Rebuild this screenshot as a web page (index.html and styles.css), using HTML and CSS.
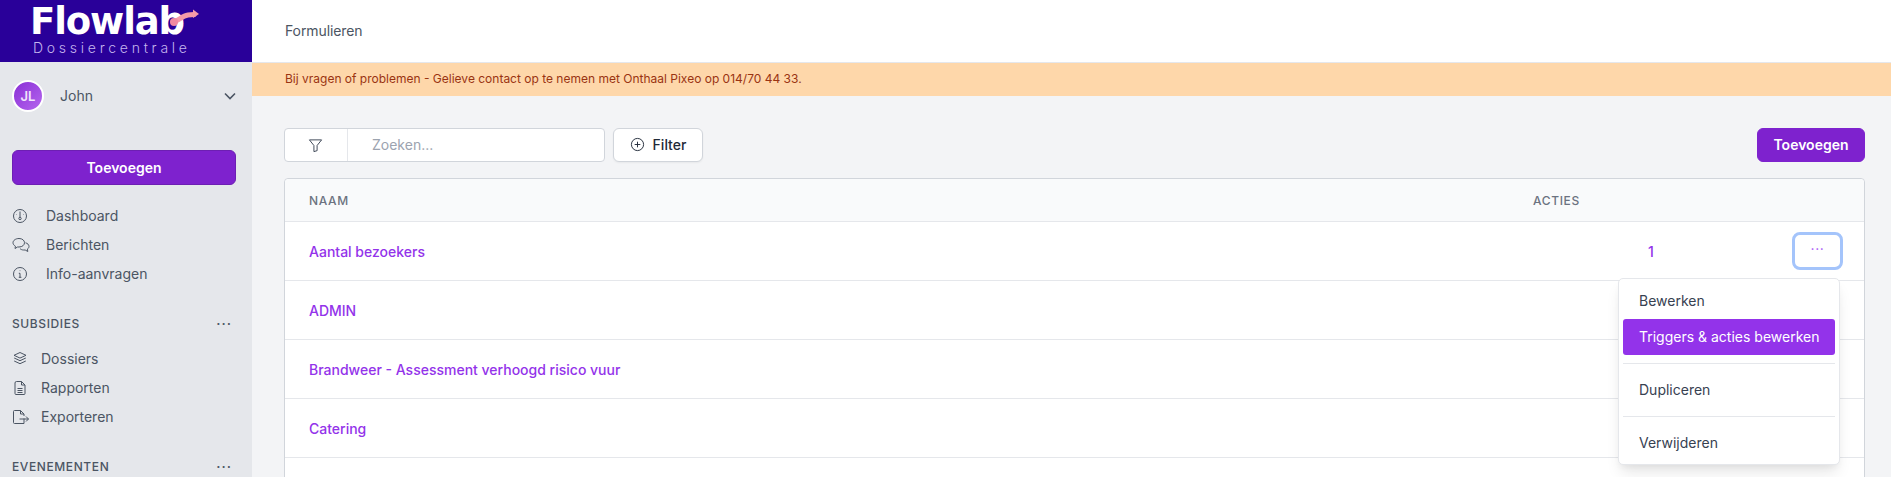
FILE: index.html
```html
<!DOCTYPE html>
<html lang="nl">
<head>
<meta charset="utf-8">
<title>Formulieren</title>
<link rel="stylesheet" href="styles.css">
</head>
<body>
<div class="app">
  <aside class="sidebar">
    <div class="brand">
      <div class="brand-inner">
        <div class="brand-name">Flowlab</div>
        <div class="brand-sub">Dossiercentrale</div>
        <svg class="brand-arrow" viewBox="0 0 32 20" width="32" height="20" aria-hidden="true"><path d="M4 14 C9 13 13 8 19 7 L25 6.500" fill="none" stroke="#f59aa8" stroke-width="5" stroke-linecap="round"/><path d="M24 1.500 L30 6 L24 10 Z" fill="#f59aa8"/><circle cx="5" cy="14" r="4" fill="#f08aa0"/></svg>
      </div>
    </div>
    <div class="user">
      <div class="avatar">JL</div>
      <span class="user-name">John</span>
      <svg class="chev" viewBox="0 0 12 8" width="12" height="8" aria-hidden="true"><path d="M1 1.500 L6 6.500 L11 1.500" fill="none" stroke="#4b5563" stroke-width="1.600"/></svg>
    </div>
    <button class="btn btn-primary btn-wide">Toevoegen</button>
    <nav class="nav nav-top">
      <a class="nav-item"><svg class="ico" viewBox="0 0 16 16"><circle cx="8" cy="8" r="6.500"/><path d="M8 4v5M8 3v.5M4 6l.4.4M12 6l-.4.4"/><circle cx="8" cy="10.500" r="1.200"/></svg><span>Dashboard</span></a>
      <a class="nav-item"><svg class="ico ico-wide" viewBox="0 0 18 16"><path d="M7 1.500c3.300 0 5.500 1.900 5.500 4.200S10.300 10 7 10H5.500L3 11.500l.4-2.300C2 8.400 1 7.200 1 5.700 1 3.400 3.700 1.500 7 1.500z"/><path d="M13.500 5.800c2 .5 3.500 1.900 3.500 3.600 0 1.100-.6 2-1.600 2.700l.4 2.400-2.600-1.500h-1.600c-1.500 0-2.900-.6-3.600-1.500"/></svg><span>Berichten</span></a>
      <a class="nav-item"><svg class="ico" viewBox="0 0 16 16"><circle cx="8" cy="8" r="6.500"/><path d="M6.800 7.300H8v4M6.800 11.300h2.600M8 4.500v.6"/></svg><span>Info-aanvragen</span></a>
    </nav>
    <div class="section-head"><span>SUBSIDIES</span><span class="more">···</span></div>
    <nav class="nav nav-sub">
      <a class="nav-item"><svg class="ico" viewBox="0 0 16 16"><path d="M8 1.500l6 2.800-6 2.800-6-2.800z"/><path d="M2.200 7L8 9.700 13.800 7M2.200 10l5.800 2.700 5.800-2.700"/></svg><span>Dossiers</span></a>
      <a class="nav-item"><svg class="ico" viewBox="0 0 16 16"><path d="M3 3a1.500 1.500 0 0 1 1.500-1.500h5L13 5v8.500a1 1 0 0 1-1 1H4a1 1 0 0 1-1-1z"/><path d="M9.500 1.500V5H13M5.500 8.500h5M5.500 10.500h5M5.500 12.500h5"/></svg><span>Rapporten</span></a>
      <a class="nav-item"><svg class="ico ico-wide" viewBox="0 0 18 16"><path d="M12 9.500V14.500H2.500a1 1 0 0 1-1-1V2.500a1 1 0 0 1 1-1h6L12 5v2M8.500 1.500V5H12"/><path d="M7.500 10h9M14 7.500l2.500 2.500-2.500 2.500"/></svg><span>Exporteren</span></a>
    </nav>
    <div class="section-head section-last"><span>EVENEMENTEN</span><span class="more">···</span></div>
  </aside>
  <main class="main">
    <header class="topbar">Formulieren</header>
    <div class="notice">Bij vragen of problemen - Gelieve contact op te nemen met Onthaal Pixeo op 014/70 44 33.</div>
    <div class="content">
      <div class="toolbar">
        <div class="search">
          <div class="search-filter"><svg class="ico ico-funnel" viewBox="0 0 16 16"><path d="M1.500 2h13L9.700 8v5.500L6.300 14.500V8z"/></svg></div>
          <div class="search-input">Zoeken...</div>
        </div>
        <button class="btn btn-filter"><svg class="ico ico-plus" viewBox="0 0 16 16"><circle cx="8" cy="8" r="6.500"/><path d="M8 5v6M5 8h6"/></svg>Filter</button>
        <button class="btn btn-primary btn-add">Toevoegen</button>
      </div>
      <div class="table">
        <div class="row row-head"><span class="col-name">NAAM</span><span class="col-act">ACTIES</span></div>
        <div class="row"><a class="col-name link">Aantal bezoekers</a><span class="count">1</span><button class="dots dots-focus">···</button></div>
        <div class="row"><a class="col-name link">ADMIN</a></div>
        <div class="row"><a class="col-name link">Brandweer - Assessment verhoogd risico vuur</a></div>
        <div class="row"><a class="col-name link">Catering</a></div>
        <div class="row"></div>
        <div class="menu">
          <div class="menu-item">Bewerken</div>
          <div class="menu-item menu-active">Triggers &amp; acties bewerken</div>
          <div class="menu-sep"></div>
          <div class="menu-item">Dupliceren</div>
          <div class="menu-sep"></div>
          <div class="menu-item">Verwijderen</div>
        </div>
      </div>
    </div>
  </main>
</div>
</body>
</html>
```
FILE: styles.css
```css
* { box-sizing: border-box; }
html, body { margin: 0; height: 477px; overflow: hidden; }
body { font-family: Inter, "Liberation Sans", sans-serif; font-size: 14px; color: #374151; background: #f3f4f6; }
.app { display: flex; height: 477px; overflow: hidden; }

.sidebar { width: 252px; flex: none; background: #e5e7eb; display: flex; flex-direction: column; color: #4b5563; }
.brand { height: 62px; background: #290099; padding: 3px 0 0 33px; flex: none; }
.brand-inner { position: relative; width: 170px; }
.brand-name { font-family: "DejaVu Sans", sans-serif; font-size: 37px; line-height: 37px; font-weight: 700; color: #fff; letter-spacing: -1.1px; height: 37px; margin-left: -3px; }
.brand-sub { font-size: 14px; font-weight: 300; line-height: 16px; letter-spacing: 3.75px; color: #c5b5ee; white-space: nowrap; }
.brand-arrow { position: absolute; left: 136px; top: 5px; }

.user { display: flex; align-items: center; height: 33px; margin: 17px 16px 0 12px; }
.avatar { width: 32px; height: 32px; border-radius: 50%; border: 2px solid #fff; background: linear-gradient(135deg, #8a2fd6, #b566ee); color: #f1e6fb; font-size: 13px; font-weight: 600; display: flex; align-items: center; justify-content: center; }
.user-name { margin-left: 16px; flex: 1; font-size: 14px; }

.btn { font-family: inherit; font-size: 14px; font-weight: 600; border-radius: 6px; cursor: pointer; padding: 0 0 2px; }
.btn-primary { background: #7e22ce; color: #fff; border: 1px solid #6d1fb3; }
.btn-wide { width: 224px; height: 35px; margin: 38px 0 0 12px; flex: none; padding-bottom: 0; }

.nav { display: flex; flex-direction: column; }
.nav-item { display: flex; align-items: center; height: 29px; color: #4b5563; padding-left: 12px; }
.nav-top { margin-top: 16px; }
.nav-top .nav-item span { margin-left: 18px; }
.nav-sub { margin-top: 13px; }
.nav-sub .nav-item span { margin-left: 13px; }
.ico { width: 16px; height: 16px; fill: none; stroke: #4b5563; stroke-width: 1; flex: none; }
.ico-wide { width: 18px; margin-right: -2px; }

.section-head { display: flex; justify-content: space-between; align-items: center; height: 16px; margin: 27px 20px 0 12px; font-size: 12px; font-weight: 500; letter-spacing: 0.6px; color: #4b5563; }
.section-last { margin-top: 27px; }
.more { font-size: 14px; letter-spacing: 1px; }

.main { flex: 1; min-width: 0; display: flex; flex-direction: column; }
.topbar { height: 62px; flex: none; background: #fff; padding: 0 0 2px 33px; display: flex; align-items: center; color: #4b5563; font-size: 14px; letter-spacing: -0.1px; }
.notice { height: 34px; flex: none; background: #fed7aa; border-top: 1px solid #e5e7eb; padding: 0 0 2px 33px; display: flex; align-items: center; color: #9a3412; font-size: 12px; }
.content { padding: 32px 26px 0 32px; }

.toolbar { display: flex; align-items: center; height: 34px; }
.search { display: flex; width: 321px; height: 34px; background: #fff; border: 1px solid #d1d5db; border-radius: 4px; }
.search-filter { width: 63px; border-right: 1px solid #e5e7eb; display: flex; align-items: center; justify-content: center; padding-right: 2px; }
.ico-funnel { width: 15px; height: 15px; stroke: #374151; }
.search-input { padding: 0 0 2px 24px; display: flex; align-items: center; color: #9ca3af; font-size: 14px; }
.btn-filter { margin-left: 8px; width: 90px; height: 34px; background: #fff; border: 1px solid #d1d5db; color: #1f2937; font-weight: 500; display: flex; align-items: center; justify-content: center; gap: 8px; box-shadow: 0 1px 2px rgba(0,0,0,.05); }
.ico-plus { width: 15px; height: 15px; stroke: #1f2937; }
.btn-add { margin-left: auto; width: 108px; height: 34px; border-color: #7e22ce; }

.table { position: relative; margin-top: 16px; background: #fff; border: 1px solid #d1d5db; border-radius: 4px 4px 0 0; }
.row { display: flex; align-items: center; height: 59px; border-bottom: 1px solid #e5e7eb; padding: 0 0 0 24px; position: relative; }
.row-head { height: 43px; background: #f9fafb; border-radius: 4px 4px 0 0; font-size: 12px; font-weight: 500; letter-spacing: 0.65px; color: #6b7280; }
.col-act { position: absolute; left: 1248px; }
.link { color: #9333ea; font-weight: 500; }
.count { position: absolute; left: 1363px; color: #9333ea; font-weight: 500; }
.dots { position: absolute; right: 21px; top: 10px; width: 51px; height: 38px; background: #fff; border: 3px solid #a4c4fb; border-radius: 8px; color: #a855f7; font-size: 14px; line-height: 14px; letter-spacing: 0.6px; padding: 0 0 4px; font-family: inherit; }

.menu { position: absolute; left: 1333px; top: 99px; width: 222px; height: 187px; background: #fff; border: 1px solid #e5e7eb; border-radius: 5px; box-shadow: 0 10px 15px -3px rgba(0,0,0,.1), 0 4px 6px -2px rgba(0,0,0,.05); padding: 4px; z-index: 5; }
.menu-item { height: 36px; display: flex; align-items: center; padding: 0 0 1px 16px; border-radius: 3px; font-size: 14px; color: #374151; }
.menu-active { background: #9333ea; color: #fff; }
.menu-sep { height: 1px; background: #e5e7eb; margin: 8px 0; }
```
